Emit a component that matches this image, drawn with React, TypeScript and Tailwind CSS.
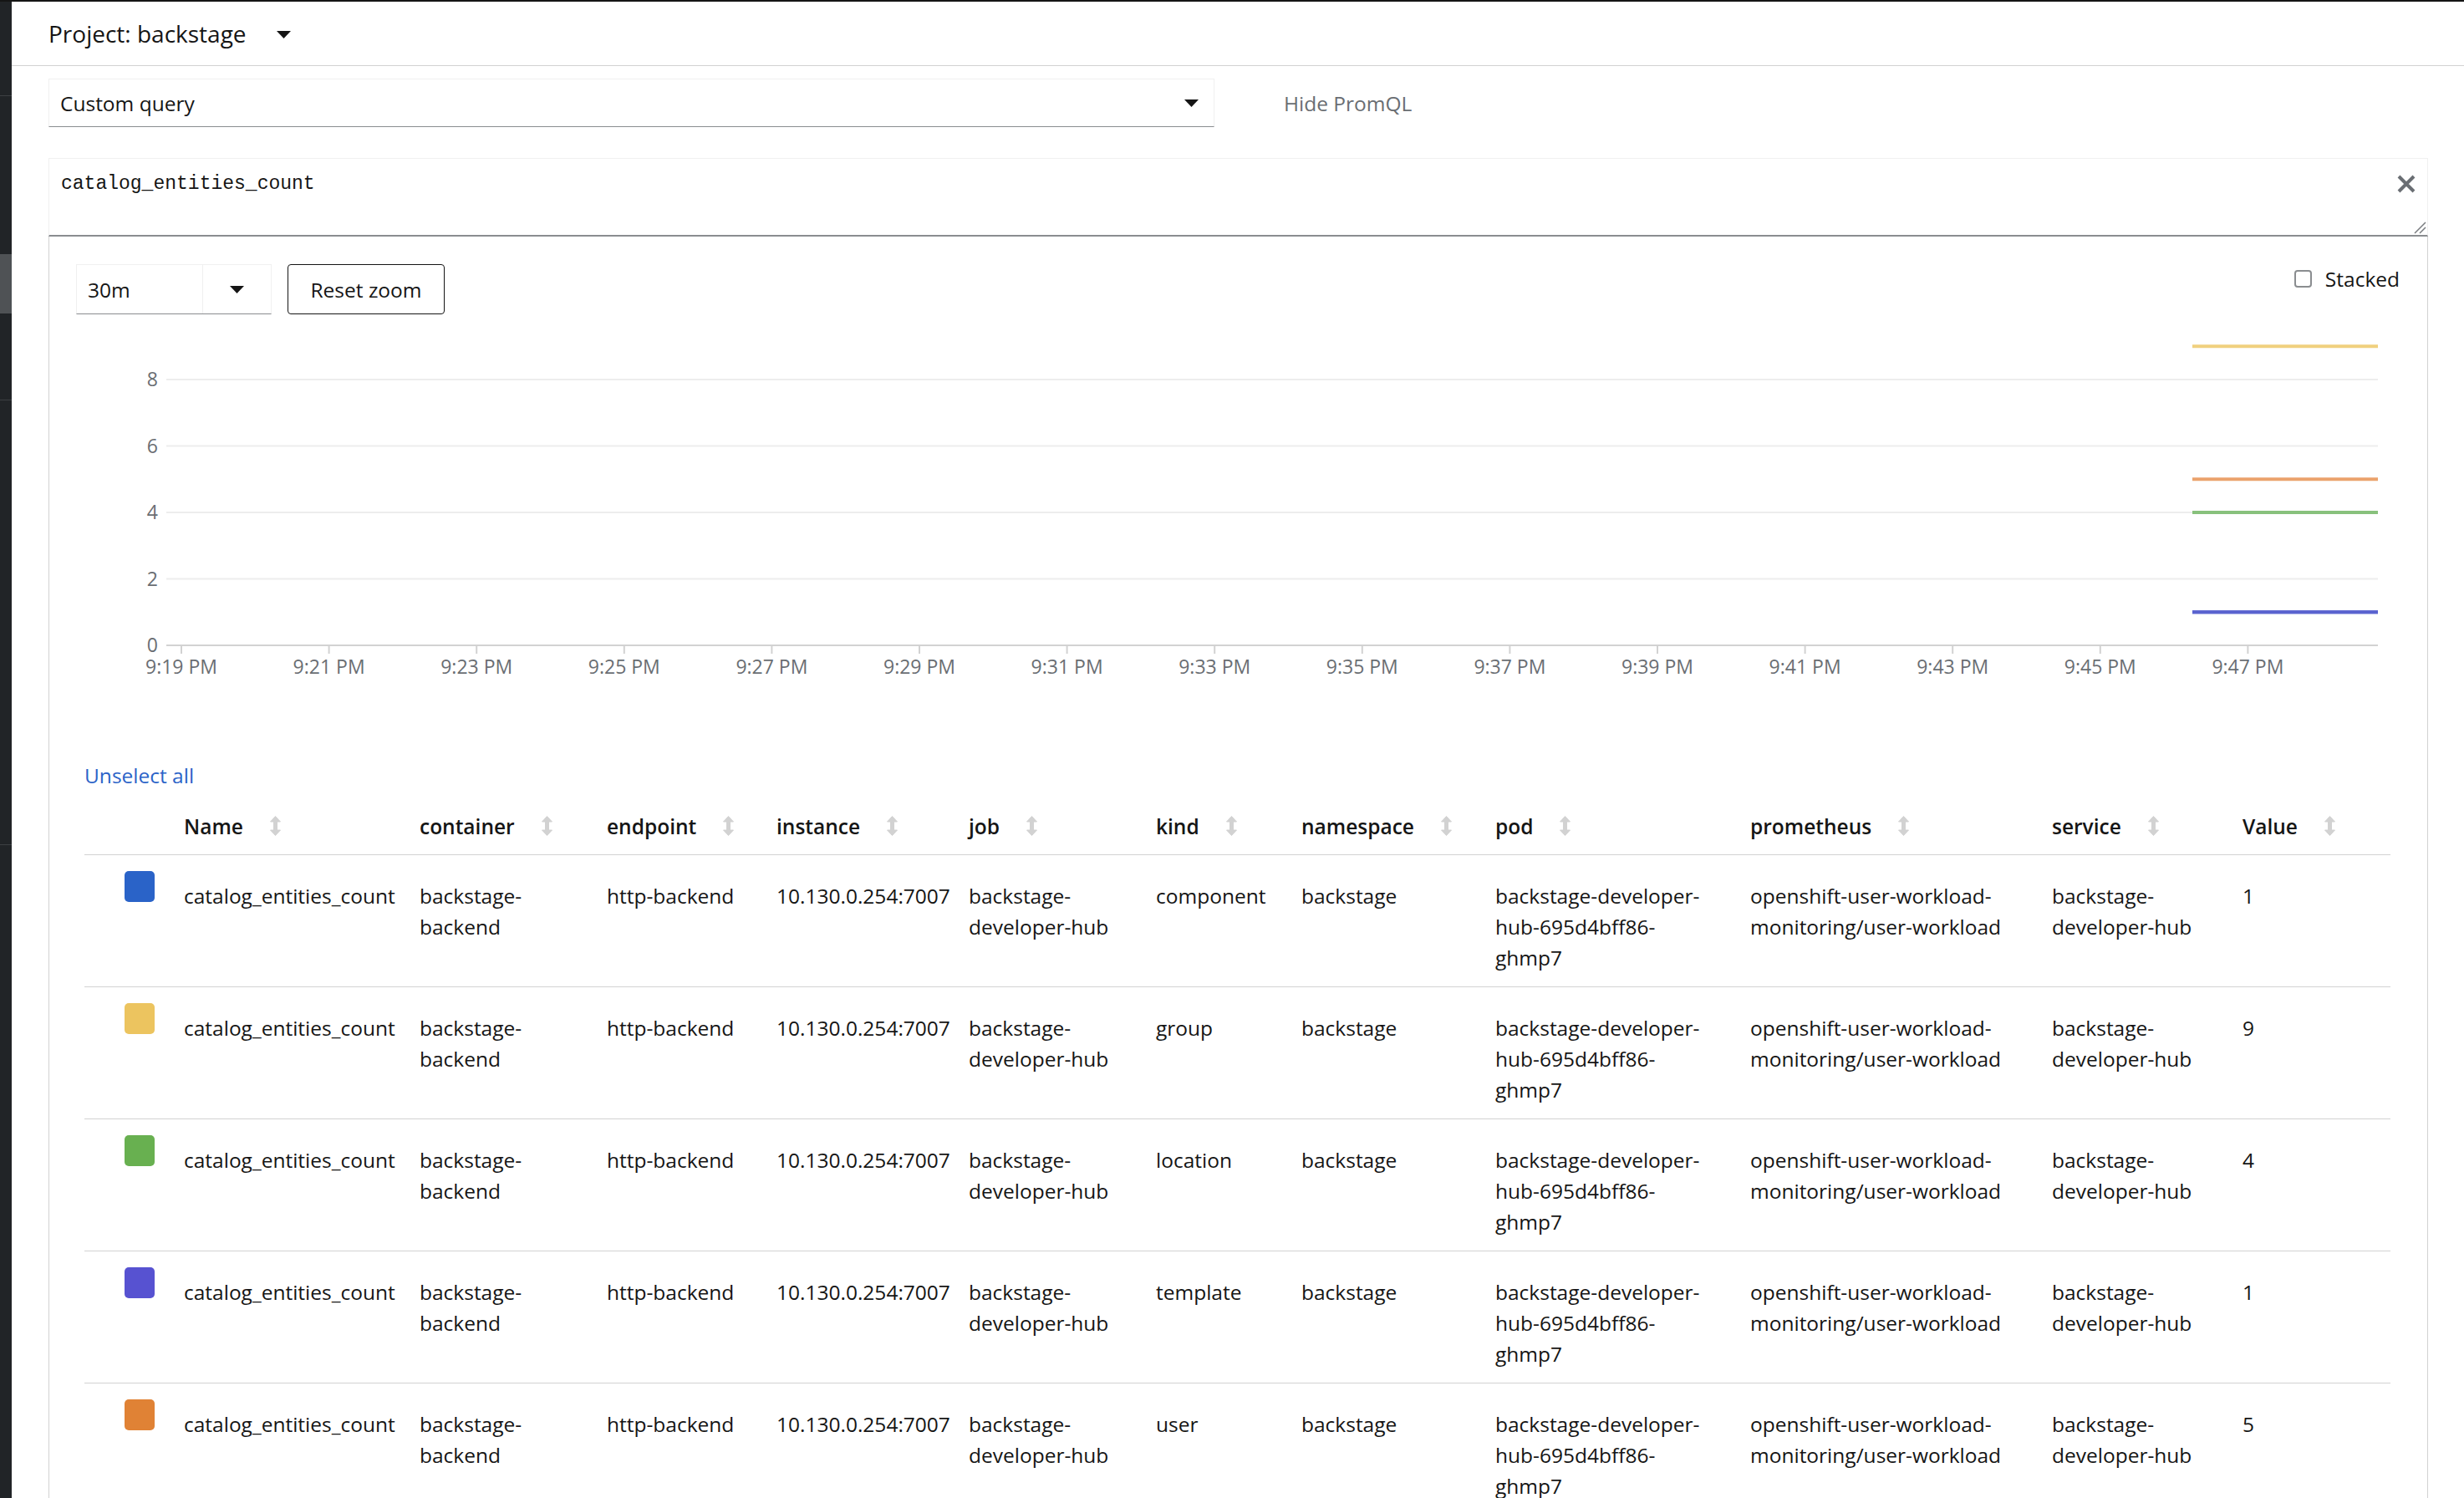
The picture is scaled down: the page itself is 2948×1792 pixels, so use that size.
import React from "react";

const COLUMNS = [
  "Name",
  "container",
  "endpoint",
  "instance",
  "job",
  "kind",
  "namespace",
  "pod",
  "prometheus",
  "service",
  "Value",
];

const SERIES = [
  { swatch: "#2a63c8", line: "#5a63cf", kind: "component", value: 1 },
  { swatch: "#ecc45f", line: "#f0d07e", kind: "group", value: 9 },
  { swatch: "#68b050", line: "#88c17c", kind: "location", value: 4 },
  { swatch: "#5752d1", line: "#5a63cf", kind: "template", value: 1 },
  { swatch: "#e08235", line: "#eba26c", kind: "user", value: 5 },
];

const TICKS = [
  "9:19 PM",
  "9:21 PM",
  "9:23 PM",
  "9:25 PM",
  "9:27 PM",
  "9:29 PM",
  "9:31 PM",
  "9:33 PM",
  "9:35 PM",
  "9:37 PM",
  "9:39 PM",
  "9:41 PM",
  "9:43 PM",
  "9:45 PM",
  "9:47 PM",
];

const Caret = () => (
  <svg width="17" height="9" viewBox="0 0 17 9" className="shrink-0">
    <path d="M0 0H17L8.5 9Z" fill="#151515" />
  </svg>
);

const SortIcon = () => (
  <svg width="13" height="24" viewBox="0 0 13 24" className="ml-[32px] shrink-0">
    <path
      d="M6.5 0.5 L12.5 7 H8.5 V17 H12.5 L6.5 23.5 L0.5 17 H4.5 V7 H0.5 Z"
      fill="#d2d2d2"
      strokeLinejoin="round"
      stroke="#d2d2d2"
    />
  </svg>
);

const Chart = () => {
  const y = (v: number) => 772 - v * 39.75;
  return (
    <svg width="2845" height="504" viewBox="59 376 2845 504" className="block">
      {[8, 6, 4, 2].map((v) => (
        <line key={v} x1="199" x2="2845" y1={y(v)} y2={y(v)} stroke="#ededed" strokeWidth="2" />
      ))}
      <line x1="199" x2="2845" y1="772" y2="772" stroke="#d2d2d2" strokeWidth="2" />
      {[0, 2, 4, 6, 8].map((v) => (
        <text
          key={v}
          x="189"
          y={y(v) + 8}
          textAnchor="end"
          fontFamily="Open Sans, sans-serif"
          fontSize="23"
          fill="#6a6e73"
        >
          {v}
        </text>
      ))}
      {TICKS.map((t, i) => {
        const x = 217 + i * 176.6;
        return (
          <g key={t}>
            <line x1={x} x2={x} y1="772" y2="782" stroke="#d2d2d2" strokeWidth="2" />
            <text
              x={x}
              y="806"
              textAnchor="middle"
              fontFamily="Open Sans, sans-serif"
              fontSize="23"
              fill="#6a6e73"
            >
              {t}
            </text>
          </g>
        );
      })}
      {SERIES.map((s) => (
        <line
          key={s.kind}
          x1="2623"
          x2="2845"
          y1={y(s.value)}
          y2={y(s.value)}
          stroke={s.line}
          strokeWidth="4"
        />
      ))}
    </svg>
  );
};

const cellsFor = (kind: string, value: number) => [
  ["catalog_entities_count"],
  ["backstage-", "backend"],
  ["http-backend"],
  ["10.130.0.254:7007"],
  ["backstage-", "developer-hub"],
  [kind],
  ["backstage"],
  ["backstage-developer-", "hub-695d4bff86-", "ghmp7"],
  ["openshift-user-workload-", "monitoring/user-workload"],
  ["backstage-", "developer-hub"],
  [String(value)],
];

const GRID =
  "grid grid-cols-[119px_282px_224px_203px_230px_224px_174px_232px_305px_361px_228px_177px]";

export default function App() {
  return (
    <div className="h-[1792px] w-[2948px] overflow-hidden bg-white font-['Open_Sans',sans-serif] text-[24.5px] leading-[37px] text-[#151515]">
      <div className="h-[2px] bg-[#151515]" />
      <div className="flex">
        {/* collapsed nav */}
        <div className="flex w-[14px] shrink-0 flex-col bg-[#212427] h-[1790px]">
          <div className="h-[112px]" />
          <div className="h-px bg-[#3d4043]" />
          <div className="h-[189px]" />
          <div className="h-[71px] bg-[#4f5255]" />
          <div className="h-[103px]" />
          <div className="h-px bg-[#3d4043]" />
          <div className="h-[531px]" />
          <div className="h-px bg-[#3d4043]" />
        </div>

        <div className="flex-1">
          <div className="flex h-[77px] items-center border-b border-[#d2d2d2] pl-[44px]">
            <span className="text-[28px]">Project: backstage</span>
            <span className="ml-[36px] mt-[2px]">
              <Caret />
            </span>
          </div>

          <div className="ml-[44px]">
            <div className="mt-[15px] flex items-center">
              <div className="flex h-[58px] w-[1395px] items-center justify-between border border-b-[#8a8d90] border-[#f0f0f0] pl-[13px] pr-[18px]">
                <span>Custom query</span>
                <Caret />
              </div>
              <span className="ml-[83px] text-[#6a6e73]">Hide PromQL</span>
            </div>

            <div className="relative mt-[37px] h-[94px] w-[2847px] border-x border-t border-b-2 border-[#f0f0f0] border-b-[#8a8d90] pl-[14px] pt-[12px] font-['Liberation_Mono',monospace] text-[23px]">
              catalog_entities_count
              <svg
                width="24"
                height="24"
                viewBox="0 0 24 24"
                className="absolute right-[13px] top-[18px]"
              >
                <path d="M3 3L21 21M21 3L3 21" stroke="#6a6e73" strokeWidth="4" />
              </svg>
              <svg width="15" height="15" viewBox="0 0 15 15" className="absolute bottom-[1px] right-[1px]">
                <path d="M1 14L14 1M7 14L14 7" stroke="#7a7d80" strokeWidth="1.5" />
              </svg>
            </div>

            <div className="w-[2847px] border-x border-[#d2d2d2] pb-[40px]">
              <div className="flex items-start justify-between pl-[32px] pr-[33px] pt-[33px]">
                <div className="flex items-center">
                  <div className="flex h-[60px] border border-[#f0f0f0] border-b-[#8a8d90]">
                    <div className="flex w-[150px] items-center pl-[13px]">30m</div>
                    <div className="flex w-[82px] items-center justify-center border-l border-[#f0f0f0]">
                      <Caret />
                    </div>
                  </div>
                  <button className="ml-[19px] h-[60px] w-[188px] rounded-[4px] border border-[#151515] bg-white">
                    Reset zoom
                  </button>
                </div>
                <div className="mt-[-1px] flex items-center">
                  <span className="h-[21px] w-[21px] rounded-[4px] border-2 border-[#8a8d90]" />
                  <span className="ml-[16px]">Stacked</span>
                </div>
              </div>

              <Chart />

              <div className="ml-[42px] w-[2759px]">
                <div className="mt-[29px] text-[#2b63c8]">Unselect all</div>

                <div className={`${GRID} h-[77px] items-center border-b border-[#d2d2d2] pt-[8px] font-semibold`}>
                  <div />
                  {COLUMNS.map((c) => (
                    <div key={c} className="flex items-center whitespace-nowrap">
                      {c}
                      <SortIcon />
                    </div>
                  ))}
                </div>

                {SERIES.map((s) => (
                  <div
                    key={s.kind}
                    className={`${GRID} h-[158px] items-start border-b border-[#d2d2d2] pt-[19px]`}
                  >
                    <div className="pl-[48px]">
                      <div className="h-[37px] w-[36px] rounded-[5px]" style={{ backgroundColor: s.swatch }} />
                    </div>
                    {cellsFor(s.kind, s.value).map((lines, i) => (
                      <div key={i} className="mt-[11px] flex flex-col">
                        {lines.map((l) => (
                          <span key={l} className="whitespace-nowrap">
                            {l}
                          </span>
                        ))}
                      </div>
                    ))}
                  </div>
                ))}
              </div>
            </div>
          </div>
        </div>
      </div>
    </div>
  );
}
